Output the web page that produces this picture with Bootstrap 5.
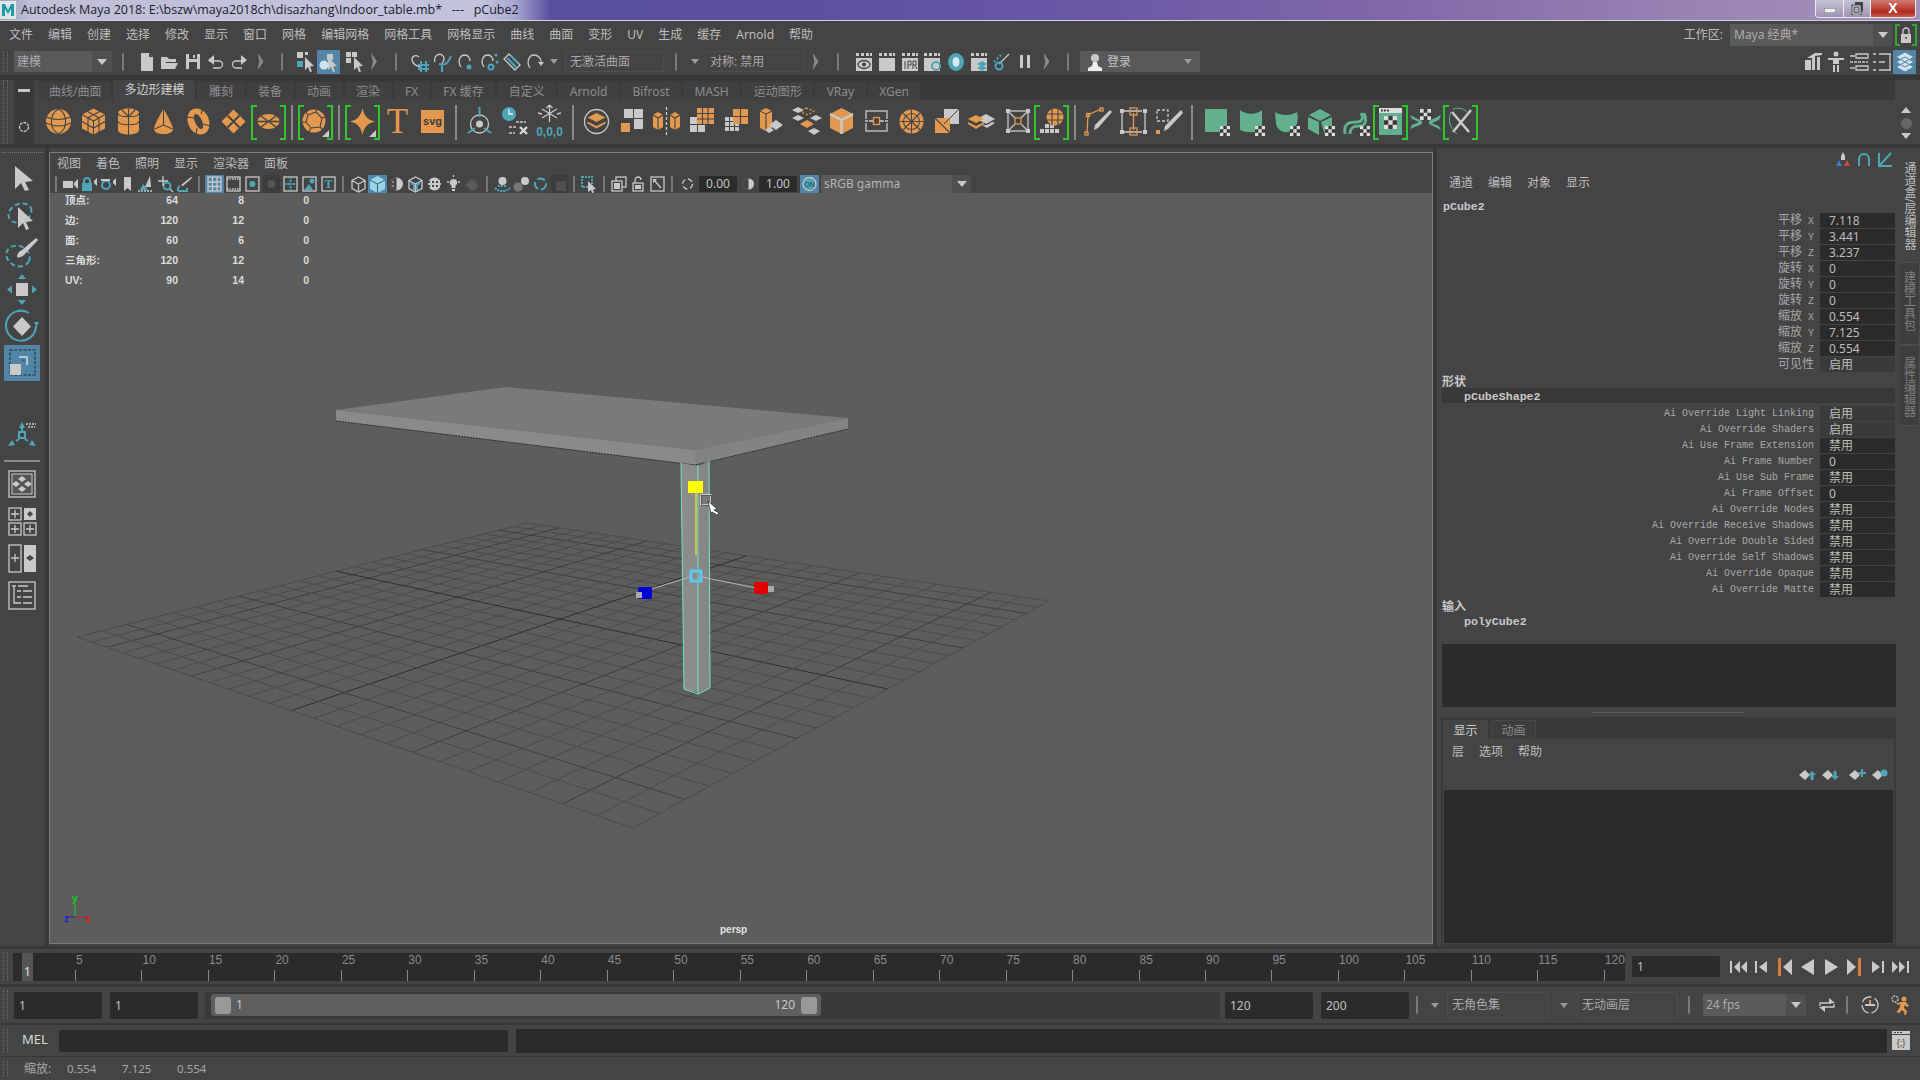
<!DOCTYPE html>
<html lang="zh"><head><meta charset="utf-8"><title>Maya</title>
<link href="https://cdn.jsdelivr.net/npm/bootstrap@5.3.0/dist/css/bootstrap.min.css" rel="stylesheet">
<style>
html,body{height:1080px;overflow:hidden}
body{background:#444;color:#bdbdbd;font:12px/16px "Noto Sans","Noto Sans CJK SC",sans-serif}
svg{display:block;flex:none}
.flex-none{flex:none}
.fo{fill:#e2994f}.fg{fill:#c9c9c9}.ft{fill:#4ea5b8}.fm{fill:#63b08f}
.ld{fill:none;stroke:#444;stroke-width:1.1}.lg{fill:none;stroke:#c9c9c9;stroke-width:1.3}.lt{fill:none;stroke:#4ea5b8;stroke-width:2}.lo{fill:none;stroke:#e2994f;stroke-width:1.3}
.ttl{height:21px;border-bottom:1px solid #cfcbe0;background:linear-gradient(90deg,#98a0b0 0,#bfc0d6 30px,#c2c2dc 480px,#a8a8d0 515px,#5a50a0 550px,#5c50a0 800px,#6a58a6 1100px,#8268a8 1400px,#9a84b4 1700px,#a592ba 100%);color:#1c1c2c;font:12.5px/20px "Open Sans","Noto Sans CJK SC",sans-serif}
.ttl-t{margin-left:5px;white-space:pre}
.win{width:101px;height:18px;margin-right:4px;border:1px solid #e8e8f0;border-top:0;border-radius:0 0 4px 4px;overflow:hidden}
.win>div{height:100%;color:#fff;font:bold 14px/17px "Liberation Sans",sans-serif;text-align:center}
.wmin{width:28px;background:linear-gradient(#c8c3d6,#9d94b4);border-right:1px solid #eee}
.wmax{width:27px;background:linear-gradient(#c8c3d6,#9d94b4);border-right:1px solid #eee}
.wcl{flex:1;background:linear-gradient(#d07a70,#b02a20 70%,#c85a48)}
.mnu{height:27px;padding-left:9px;gap:15px}
.mnu .nav-link,.pm .nav-link{padding:0;color:#bdbdbd;font-size:12px;line-height:16px}
.wk{margin-left:auto;height:22px;padding-right:3px}
.wkf{width:143px;height:22px;background:#5a5a5a;color:#aaa;padding:3px 4px;margin-left:7px}
.wka{width:19px;height:22px;background:#4f4f4f;margin-right:3px}
.tri{width:0;height:0;border-left:5px solid transparent;border-right:5px solid transparent;border-top:6px solid #c9c9c9;margin:auto}
.tup{transform:rotate(180deg)}
.tsm{border-left-width:4px;border-right-width:4px;border-top-width:5px;border-top-color:#9a9a9a}
.lock{width:22px;height:22px}
.tbar{height:27px;padding-left:3px}
.hd{width:5px;flex:none;align-self:stretch;margin:3px 0;border-left:1px dotted #6e6e6e;border-right:1px dotted #6e6e6e}
.dd{height:21px;background:#5a5a5a;color:#aaa;padding-left:3px;line-height:21px}
.dd1{width:98px;margin-left:6px}.dda{width:20px;height:100%;margin-left:auto;background:#4f4f4f;display:flex;align-items:center}
.vs{width:12px;height:18px;flex:none;position:relative}
.vs::after{content:"";display:block;width:2px;height:100%;margin:auto;background:#7a7a7a;border-radius:1px}
.as{width:21px;height:18px;flex:none}
.as::after{content:"";display:block;height:18px;width:6px;margin:auto;background:#8a8a8a;clip-path:polygon(0 0,100% 50%,0 100%,30% 50%)}
.as16{width:16px}
.tb{width:23px;height:24px;flex:none;display:flex;align-items:center;justify-content:center}
.on{background:#5285a6}
.fl{height:21px;border:1px solid #4e4e4e;color:#a8a8a8;padding-left:4px;line-height:19px;border-radius:2px;flex:none}
.ml1{margin-left:1px}.ml2{margin-left:2px}.ml5{margin-left:5px}.ml3{margin-left:3px}.ml8{margin-left:8px}.ml6{margin-left:6px}.ml4{margin-left:4px}.ml9{margin-left:9px}
.w99{width:99px}.w100{width:100px}
.dsp{width:15px;flex:none}
.sp6{width:6px;flex:none}
.log{width:120px;background:#595959;color:#c4c4c4;padding-left:7px;line-height:21px;height:21px;margin-left:6px}
.sep5{height:5px;background:#373737;flex:none}
.sep3{height:3px;background:#373737;flex:none}.sep2{height:2px;background:#373737;flex:none}.sep1{height:1px;background:#373737;flex:none}
.shelf{height:64px;flex:none;padding-left:3px}
.shd{margin:0}
.shc{width:20px;height:64px;margin-left:6px;background:#3a3a3a;flex:none;padding-top:9px}
.shbar{width:12px;height:3px;background:#c9c9c9;margin:0 auto 28px}
.shm{flex:1;min-width:0;margin-left:5px}
.stabs{height:20px;background:#3a3a3a;margin-right:3px;gap:2px;border:0;padding-left:0;align-items:flex-end}
.stabs .nav-link{padding:0 11.5px;height:18px;line-height:20px;background:#404040;color:#8d8d8d;font-size:12px;border:0;border-radius:2px 2px 0 0;margin:0}
.stabs .nav-link.active{background:#444;color:#d0d0d0;height:20px;line-height:20px;padding:0 11px}
.stabs li:first-child .nav-link{padding:0 10px}
.sic{height:44px;padding-left:2px}
.ic{width:35px;height:43px;flex:none;position:relative}
.ic svg{margin-top:-1px}
.vs2{width:12px;height:35px;flex:none}
.vs2::after{content:"";display:block;width:2px;height:100%;margin:auto;background:#8a8a8a}
.gb::before,.gb::after{content:"";position:absolute;top:4px;bottom:4px;width:6px;border:2px solid #2dc62d}
.gb::before{left:0;border-right:0}.gb::after{right:0;border-left:0}
.scr{width:16px;margin-left:auto;margin-right:6px;height:34px}
.main{height:798px;flex:none;min-height:0}
.tl{width:45px;flex:none;padding-bottom:6px}
.tlh{height:1px;margin:4px 2px 6.5px 2px;border-top:1px dotted #7a7a7a;flex:none}
.sl{width:36px;height:37px;margin-left:4px;flex:none}
.hr1{height:2px;background:#8a8a8a;width:36px;margin:4px 0 4px 4px;flex:none}
.gut{width:4px;background:#373737;flex:none}
.vp{width:1384px;height:792px;margin-top:4px;border:1px solid #7c7c7c;flex:none;background:#5d5d5d;position:relative;overflow:hidden}
.pm{height:22px;gap:15px;padding-left:7px;background:#444}
.pt{height:18px;background:#444;padding-left:1px}
.ps{width:19px;height:18px;flex:none}
.psw{width:10px;height:16px;flex:none}
.psw::after{content:"";display:block;width:2px;height:100%;margin:auto;background:#777}
.pf{width:38px;height:16px;background:#2b2b2b;color:#c4c4c4;text-align:center;line-height:16px;border-radius:2px;flex:none}
.srgb{width:150px;height:18px;background:#5a5a5a;color:#b4b4b4;margin-left:2px;padding-left:3px;line-height:18px}
.srgba{width:19px;height:100%;margin-left:auto;background:#4f4f4f;display:flex;align-items:center}
.gl{position:absolute;left:0;top:40px;width:1382px;height:750px}
.hud{position:absolute;left:15px;top:37px;display:grid;grid-template-columns:50px 63px 66px 65px;grid-auto-rows:20px;color:#dcdcdc;font:bold 10.5px/20px "Liberation Sans","Noto Sans CJK SC",sans-serif}
.hud span:not(.hl){text-align:right}
.persp{position:absolute;left:670px;top:770px;width:26px;text-align:center;color:#e2e2e2;font:bold 10px/14px "Liberation Sans",sans-serif}
.cbox{width:463px;flex:none;padding:0 5px}
.chic{height:24px;gap:5px;padding-right:2px;padding-bottom:3px}
.chm{height:22px;gap:15px;padding-left:7px;align-items:center}
.nm{font:bold 11.6px/16px "Liberation Mono",monospace;color:#c8c8c8}
.nm1{height:18px;padding:5px 0 0 1px;flex:none}
.rw{height:16px;flex:none;justify-content:flex-end;align-items:center}
.rl{color:#a8a8a8;font:10px/17px "Liberation Mono","Noto Sans CJK SC",monospace;text-align:right;white-space:pre;padding-right:6px}
.rl b{font:12px/16px "Noto Sans CJK SC",sans-serif;color:#a8a8a8}
.rv{width:75px;height:15px;background:#2b2b2b;color:#bdbdbd;padding-left:9px;line-height:15px;flex:none;border-radius:1px;font-size:12px}
.rv2{background:#3a3a3a}
.hdg{height:16px;flex:none;font:bold 12px/18px "Noto Sans CJK SC",sans-serif;color:#c8c8c8}
.bar{height:15px;background:#383838;padding-left:22px;margin-bottom:2px;line-height:17px;flex:none}
.sub{height:16px;padding-left:22px;margin-bottom:15px;flex:none;line-height:18px}
.blk{height:63px;background:#2b2b2b;flex:none;margin-right:-1px}
.dots{height:10px;flex:none;display:flex;align-items:center;justify-content:center}
.dots::after{content:"";width:151px;border-top:1px dotted #777}
.lay{flex:1;min-height:0;margin:0 -1px;background:#444;border:solid #3a3a3a;border-width:0 2px 2px 2px}
.ltabs{height:22px;background:#3a3a3a;border:0;padding:3px 0 0 0;gap:3px;flex:none;flex-wrap:nowrap}
.ltabs .nav-link{width:45px;height:19px;padding:0;text-align:center;line-height:19px;background:#3d3d3d;color:#888;border:1px solid #484848;border-bottom:0;border-radius:2px 2px 0 0;font-size:12px;margin:0}
.ltabs .nav-link.active{background:#444;color:#ccc;border-color:#444}
.lm{height:26px;gap:15px;padding-left:9px;flex:none}
.lic{height:25px;gap:5px;padding:0 5px 5px 0;flex:none}
.llist{flex:1;background:#2b2b2b;margin:0 1px 1px}
.vt{width:20px;flex:none;padding-top:2px}
.vtb{writing-mode:vertical-rl;font-size:12px;line-height:16px;background:#3e3e3e;color:#7f7f7f;border:1px solid #4c4c4c;border-left:0;display:flex;align-items:center;flex:none;padding-right:2px}
.v1{height:112px;background:#444;color:#bdbdbd;padding-top:12px;border:0}
.v2{height:83px;padding-top:8px}.v3{height:81px;padding-top:11px}
.tlr{height:35px;padding-left:3px;flex:none}
.trk{width:1612px;height:28px;margin-left:5px;background:#2b2b2b;overflow:hidden;flex:none;padding-left:9px}
.cur{width:11px;height:28px;background:#555;color:#e4e4e4;text-align:center;line-height:38px;flex:none;margin-right:42px}
.tk{flex:0 0 66.48px;height:28px;padding-left:1px;color:#8a8a8a;font:12px/14px "Liberation Sans",sans-serif;background:linear-gradient(#8a8a8a,#8a8a8a) left bottom/1px 11px no-repeat;white-space:nowrap}
.fd{height:27px;background:#2b2b2b;color:#c0c0c0;border-radius:2px;padding-left:5px;line-height:27px;flex:none;width:88px}
.fd21{height:21px;line-height:21px}
.ml7{margin-left:7px}
.pb{gap:0;margin-left:7px}
.rng{height:36px;padding-left:3px;flex:none}
.strip{width:1015px;height:27px;margin-left:7px;background:#3a3a3a;padding-left:6px;flex:none}
.sld{width:610px;height:22px;background:#5e5e5e;border-radius:3px;padding:0 4px;color:#c8c8c8}
.knob{width:16px;height:17px;background:#999;border-radius:3px;flex:none;margin-right:5px}
.knob2{margin:0 0 0 6px}
.cmd{height:31px;padding-left:3px;flex:none}
.mel{width:37px;margin-left:14px;color:#d8d8d8;flex:none;font-size:13px;line-height:15px;padding-bottom:2px}
.c1{width:449px;height:22px;background:#2b2b2b;border-radius:2px;flex:none}
.c2{width:1371px;height:24px;background:#2b2b2b;margin-left:8px;flex:none}
.stat{height:23px;padding-left:3px;flex:none;color:#a8a8a8;line-height:23px}
.stat span{flex:none}
.st1{margin-left:16px;width:43px}.st2{width:55px;font-size:11.5px}
#chr,#ani{width:101px;height:26px;line-height:24px}
#fps{width:103px;height:22px;line-height:22px}
</style></head>
<body class="d-flex flex-column">
<svg class="d-none"><defs>
<symbol id="ck" viewBox="0 0 12 12"><rect width="12" height="12" fill="#3a3a3a"/><path fill="#ddd" d="M0 0h4v4H0zM8 0h4v4H8zM4 4h4v4H4zM0 8h4v4H0zM8 8h4v4H8z"/></symbol>
<symbol id="tri" viewBox="0 0 7 7"><path class="fg" d="M7 0v7H0z"/></symbol>
<linearGradient id="mg" x1="0" y1="0" x2="0" y2="1"><stop offset="0" stop-color="#8fd5dc"/><stop offset="1" stop-color="#1f9aa6"/></linearGradient>
</defs></svg>

<!-- title bar -->
<div class="ttl d-flex align-items-start flex-none">
<svg width="16" height="20" viewBox="0 0 16 20"><rect y="1" width="16" height="18" fill="#dfe6e8"/><path fill="#1f9aa6" d="M2 16V4h3l3 6 3-6h3v12h-3V9l-3 5-3-5v7z"/></svg>
<div class="ttl-t">Autodesk Maya 2018: E:\bszw\maya2018ch\disazhang\Indoor_table.mb*   ---   pCube2</div>
<div class="win ms-auto d-flex"><div class="wmin d-flex align-items-end justify-content-center pb-1"><svg width="12" height="5"><rect width="12" height="5" fill="#eee" stroke="#666"/></svg></div><div class="wmax d-flex align-items-center justify-content-center"><svg width="12" height="13"><path fill="none" stroke="#444" stroke-width="3" d="M4 1.500h6.500v8M2 4h7v8H2z"/><path fill="none" stroke="#eee" d="M2 4h7v8H2z"/></svg></div><div class="wcl">X</div></div>
</div>

<!-- menu -->
<nav class="nav mnu align-items-center flex-nowrap flex-none">
<a class="nav-link">文件</a><a class="nav-link">编辑</a><a class="nav-link">创建</a><a class="nav-link">选择</a><a class="nav-link">修改</a><a class="nav-link">显示</a><a class="nav-link">窗口</a><a class="nav-link">网格</a><a class="nav-link">编辑网格</a><a class="nav-link">网格工具</a><a class="nav-link">网格显示</a><a class="nav-link">曲线</a><a class="nav-link">曲面</a><a class="nav-link">变形</a><a class="nav-link">UV</a><a class="nav-link">生成</a><a class="nav-link">缓存</a><a class="nav-link">Arnold</a><a class="nav-link">帮助</a>
<div class="wk d-flex align-items-center"><span>工作区:</span><div class="wkf">Maya 经典*</div><div class="wka d-flex align-items-center"><div class="tri"></div></div>
<div class="lock"><svg width="22" height="22" viewBox="0 0 22 22"><path d="M5 1H1v20h4M17 1h4v20h-4" fill="none" stroke="#2dc62d" stroke-width="1.500"/><path class="lg" stroke-width="2" d="M8 10V7a3 3 0 0 1 6 0v3"/><rect class="fg" x="6" y="10" width="10" height="9"/><circle cx="11" cy="14" r="1" fill="#444"/></svg></div></div>
</nav>

<!-- status tool row -->
<div class="tbar d-flex align-items-center flex-none">
<div class="hd"></div>
<div class="dd dd1 d-flex flex-none">建模<div class="dda"><div class="tri"></div></div></div>
<div class="vs ml5"></div><div class="sp6"></div>
<div class="tb"><svg width="16" height="20"><path class="fg" d="M2 1h8l4 4v14H2z"/><path fill="#444" d="M10 1v4h4z"/></svg></div>
<div class="tb"><svg width="19" height="16"><path class="fg" d="M1 3h6l2 2h7v3H6l-2 7H1z"/><path class="fg" d="M5 9h13l-3 6H3z"/></svg></div>
<div class="tb"><svg width="16" height="17"><path class="fg" d="M1 1h14v15H1z"/><path fill="#444" d="M4 1h8v5H4zM4 9h8v7H4z"/><rect class="fg" x="8" y="2" width="2" height="3"/></svg></div>
<div class="tb"><svg width="18" height="14"><path class="lg" stroke-width="2.500" d="M7 2 3 6h9a3.500 3.500 0 0 1 0 7H6"/><path class="fg" d="M7 0v10L1 5z"/></svg></div>
<div class="tb"><svg width="18" height="14"><path class="lg" stroke-width="2.500" d="M11 6H6a3.500 3.500 0 0 0 0 7h6"/><path class="fg" d="M11 0v10l6-5z"/></svg></div>
<div class="as"></div><div class="vs ml5"></div><div class="ml3"></div>
<div class="tb ml3"><svg width="19" height="22"><path class="fg" d="M9 6l9 9-4 .500 2 5-2 .500-2-5-3 3z"/><rect class="fg" x="1" y="1" width="6" height="6"/><rect class="ft" x="1" y="10" width="6" height="6"/><rect class="fg" x="9" y="1" width="3" height="3"/></svg></div>
<div class="tb on"><svg width="20" height="22"><path class="fg" d="M9 6l9 9-4 .500 2 5-2 .500-2-5-3 3z"/><circle cx="5" cy="14" r="4.500" fill="#cfe2ee"/><rect class="fg" x="8" y="3" width="6" height="6"/></svg></div>
<div class="tb ml3"><svg width="20" height="22"><path class="fg" d="M9 6l9 9-4 .500 2 5-2 .500-2-5-3 3z"/><path class="fg" d="M1 1h5v5H1zM7 1h5v5H7zM1 7h5v5H1z"/></svg></div>
<div class="as as16"></div><div class="vs ml8"></div><div class="ml6"></div>
<div class="tb"><svg width="20" height="20"><path class="lg" d="M9 5a4 4 0 0 0-7 3c1 4 4 6 8 7"/><path class="lt" stroke-width="1.200" d="M8 13h11M8 17h11M11 9v11M16 9v11"/></svg></div>
<div class="tb"><svg width="20" height="20"><path class="lg" d="M2 10C0 4 6 1 9 3c3 2 2 6 0 9"/><path class="lt" stroke-width="1.500" d="M9 14v6M6 12c5 2 9 0 12-8"/></svg></div>
<div class="tb"><svg width="20" height="20"><path class="lg" stroke-width="1.800" d="M5 15C1 9 4 3 9 3c3 0 5 3 5 6"/><circle class="ft" cx="13" cy="15" r="2.500"/></svg></div>
<div class="tb"><svg width="20" height="20"><path class="lg" stroke-width="1.800" d="M5 15C1 9 4 3 9 3c3 0 5 3 5 6"/><circle class="lt" stroke-width="1.200" cx="12" cy="15" r="2.500"/><circle class="ft" cx="17" cy="3" r="1.500"/><circle class="ft" cx="18" cy="10" r="1.500"/></svg></div>
<div class="tb"><svg width="20" height="20"><path class="lg" d="M7 2l11 11-5 5L2 7z"/><path class="lt" stroke-width="1.200" d="M5 6l10 10M9 4l7 7"/></svg></div>
<div class="tb"><svg width="20" height="20"><path class="lg" stroke-width="1.800" d="M5 16C1 10 4 3 9 3c4 0 7 3 7 7"/><path class="fg" d="M13 10h6l-3 4z"/></svg></div>
<div class="dsp d-flex align-items-center"><div class="tri tsm"></div></div>
<div class="fl ml4 w99" >无激活曲面</div>
<div class="vs ml6"></div><div class="ml5"></div>
<div class="dsp d-flex align-items-center"><div class="tri tsm"></div></div>
<div class="fl ml3 w100">对称: 禁用</div>
<div class="as"></div><div class="vs ml6"></div><div class="ml8"></div>
<div class="tb"><svg width="18" height="20"><path class="fg" d="M1 6h16v13H1z"/><path class="fg" d="M1 1h3v3H1zM6 1h3v3H6zM11 1h3v3h-3zM15 1h2v3h-2z"/><ellipse cx="9" cy="12.500" rx="6" ry="4" fill="none" stroke="#444" stroke-width="1.300"/><circle cx="9" cy="12.500" r="2" fill="#444"/></svg></div>
<div class="tb"><svg width="18" height="20"><path class="fg" d="M1 6h16v13H1z"/><path class="fg" d="M1 1h3v3H1zM6 1h3v3H6zM11 1h3v3h-3zM15 1h2v3h-2z"/></svg></div>
<div class="tb"><svg width="18" height="20"><path class="fg" d="M1 6h16v13H1z"/><path class="fg" d="M1 1h3v3H1zM6 1h3v3H6zM11 1h3v3h-3zM15 1h2v3h-2z"/><path fill="none" stroke="#444" d="M4 9v8M7 9v8M7 9h3v4H7M12 17v-8h3v4h-3M14 13l2 4"/></svg></div>
<div class="tb"><svg width="19" height="20"><path class="fg" d="M1 6h16v13H1z"/><path class="fg" d="M1 1h3v3H1zM6 1h3v3H6zM11 1h3v3h-3zM15 1h2v3h-2z"/><circle class="lt" cx="13" cy="14" r="4" stroke-width="2.500"/></svg></div>
<div class="tb"><svg width="18" height="20"><ellipse class="ft" cx="9" cy="10" rx="8" ry="9"/><ellipse cx="9" cy="10" rx="3.500" ry="5" fill="#d8e8ec"/></svg></div>
<div class="tb"><svg width="18" height="20"><path class="fg" d="M1 6h16v13H1z"/><path class="fg" d="M1 1h3v3H1zM6 1h3v3H6zM11 1h3v3h-3zM15 1h2v3h-2z"/><path class="ft" d="M12 9l5 3-5 3-5-3zM12 13l5 3-5 3-5-3z"/></svg></div>
<div class="tb"><svg width="18" height="20"><path class="lg" stroke-width="2.500" d="M16 2 6 12"/><circle class="lt" cx="6" cy="14" r="3.500"/><path class="lt" stroke-width="1" stroke-dasharray="2" d="M1 10 8 3"/></svg></div>
<div class="tb"><svg width="12" height="15"><path class="fg" d="M1 1h3v13H1zM8 1h3v13H8z"/></svg></div>
<div class="as"></div><div class="vs ml5"></div>
<div class="log d-flex align-items-center"><svg width="16" height="18" class="me-1"><circle class="fg" cx="8" cy="5" r="4"/><path fill="#eee" d="M6 9h4l1 4 4 2v3H1v-3l4-2z"/></svg>登录<div class="tri tsm ms-auto me-2"></div></div>
<div class="d-flex ms-auto align-items-center flex-none">
<div class="tb"><svg width="20" height="20"><path class="fg" d="M4 6 12 1h7v2l-7 1v14H9V6zM2 8h6v10H2z"/><path class="fg" d="M14 5h3v13h-3z"/></svg></div>
<div class="tb"><svg width="18" height="22"><circle class="fg" cx="9" cy="3" r="2.500"/><path class="fg" d="M1 7h16v2h-5v4H6V9H1zM6 14h2v7H6zM10 14h2v7h-2z"/></svg></div>
<div class="tb"><svg width="20" height="20"><path class="lg" d="M7 2h12v4H7zM1 4h5M7 14h12v4H7zM1 16h5"/><path class="lg" stroke-dasharray="3 1" d="M1 10h18"/></svg></div>
<div class="tb"><svg width="20" height="20"><path class="lg" d="M7 2h12M7 18h12M7 10h6M1 2h3M1 10h3M1 18h3M18 2v16"/></svg></div>
<div class="tb on me-1"><svg width="20" height="22"><path fill="#cfe2ee" stroke="#5285a6" d="M10 1l9 5-9 5-9-5zM10 6l9 5-9 5-9-5zM10 11l9 5-9 5-9-5z"/></svg></div>
</div>
</div>
<div class="sep5"></div>

<!-- shelf -->
<div class="shelf d-flex">
<div class="hd shd"></div>
<div class="shc"><div class="shbar"></div><svg width="14" height="14" viewBox="0 0 14 14" class="mx-auto"><circle class="lg" stroke-width="2.500" cx="7" cy="7" r="4.500" stroke-dasharray="3 1"/></svg></div>
<div class="shm d-flex flex-column">
<ul class="nav nav-tabs stabs flex-nowrap">
<li><a class="nav-link">曲线/曲面</a></li><li><a class="nav-link active">多边形建模</a></li><li><a class="nav-link">雕刻</a></li><li><a class="nav-link">装备</a></li><li><a class="nav-link">动画</a></li><li><a class="nav-link">渲染</a></li><li><a class="nav-link">FX</a></li><li><a class="nav-link">FX 缓存</a></li><li><a class="nav-link">自定义</a></li><li><a class="nav-link">Arnold</a></li><li><a class="nav-link">Bifrost</a></li><li><a class="nav-link">MASH</a></li><li><a class="nav-link">运动图形</a></li><li><a class="nav-link">VRay</a></li><li><a class="nav-link">XGen</a></li>
</ul>
<div class="sic d-flex align-items-center">
<div class="ic"><svg width="35" height="43"><circle class="fo" cx="17.500" cy="21.500" r="12.500"/><path class="ld" d="M5 17q12.500 5 25 0M5 23q12.500 6 25 0M17.500 9C8 14 8 29 17.500 34M17.500 9C27 14 27 29 17.500 34"/></svg></div>
<div class="ic"><svg width="35" height="43"><path class="fo" d="M17.500 8.500 29 14.500V28.500L17.500 34.500 6 28.500V14.500Z"/><path class="ld" d="M6 14.500 17.500 21 29 14.500M17.500 21V34.500M11.500 11.500 23 17.700M23.500 11.500 12 17.700M6 21.500 17.500 28 29 21.500M12 18v14M23 18v14"/></svg></div>
<div class="ic"><svg width="35" height="43"><path class="fo" d="M7 13c0-6 21-6 21 0V30c0 6-21 6-21 0Z"/><path class="ld" d="M7 13c0 5 21 5 21 0M7 21c0 5 21 5 21 0M17.500 8.500v8M10.500 9.500l7 7M24.500 9.500l-7 7M17.500 17v18"/></svg></div>
<div class="ic"><svg width="35" height="43"><path class="fo" d="M17.500 8C21 16 27 25 27 29c0 3-4 5-9.500 5S8 32 8 29C8 25 14 16 17.500 8Z"/><path class="ld" d="M17.500 8V25M8.500 29 17.500 25 26.500 29"/></svg></div>
<div class="ic"><svg width="35" height="43"><ellipse class="fo" cx="17.500" cy="21.500" rx="10.500" ry="13.500" transform="rotate(-25 17.500 21.500)"/><ellipse fill="#444" cx="17.500" cy="21.500" rx="3.500" ry="8" transform="rotate(-25 17.500 21.500)"/><path class="ld" d="M6 17l7 1M22 8l-2 6M29 26l-7-2M15 35l1-7"/></svg></div>
<div class="ic"><svg width="35" height="43"><path class="fo" d="M17.500 9.500 29.500 21.500 17.500 33.500 5.500 21.500Z"/><path fill="none" stroke="#444" stroke-width="1.800" d="M11.500 15.500 23.500 27.500M23.500 15.500 11.500 27.500"/></svg></div>
<div class="ic gb"><svg width="35" height="43"><ellipse class="fo" cx="17.500" cy="21.500" rx="11" ry="7.500"/><path fill="none" stroke="#444" stroke-width="1.500" d="M6.500 21.500h22M10 16l15 11M25 16 10 27"/></svg></div>
<div class="vs2"></div>
<div class="ic gb"><svg width="35" height="43"><circle class="fo" cx="16" cy="21" r="11.500"/><path class="ld" d="M10 15l8-3 6 6-2 9-9 1-5-6zM10 15 7 11M18 12l1-4M24 18l4-1M22 27l3 3M13 28l-2 4M8 22H4"/><use href="#tri" x="24" y="30" width="7" height="7"/></svg></div>
<div class="vs2"></div>
<div class="ic gb"><svg width="35" height="43"><path class="fo" d="M17.500 8C19 16 23 20 30 21.500 23 23 19 27 17.500 35 16 27 12 23 5 21.500 12 20 16 16 17.500 8Z"/><use href="#tri" x="24" y="30" width="7" height="7"/></svg></div>
<div class="ic"><svg width="35" height="43"><text x="17.500" y="33" text-anchor="middle" class="fo" font-family="Liberation Serif" font-size="35">T</text></svg></div>
<div class="ic"><svg width="35" height="43"><rect class="fo" x="6" y="10" width="23" height="23"/><text x="17.500" y="25" text-anchor="middle" fill="#3a3a3a" font-family="Liberation Sans" font-weight="bold" font-size="11">svg</text></svg></div>
<div class="vs2"></div>
<div class="ic"><svg width="35" height="43"><circle class="lg" cx="17.500" cy="24" r="9"/><circle class="fg" cx="17.500" cy="24" r="3.500"/><path class="lt" stroke-width="1.500" d="M17.500 7v10M6 33l7-5M29 33l-7-5"/></svg></div>
<div class="ic"><svg width="35" height="43"><circle class="ft" cx="12" cy="14" r="7"/><path fill="none" stroke="#eee" stroke-width="1.300" d="M12 9v5h4"/><path class="lg" d="M19 22h10M12 27h8M12 33h6" stroke-dasharray="3 1"/><path fill="none" stroke="#d8d8d8" stroke-width="2.400" d="M23 27l7 7M30 27l-7 7"/></svg></div>
<div class="ic"><svg width="35" height="43"><path class="lg" stroke-width="1.500" d="M17.500 5v17M10 9l15 9M25 9l-15 9M17.500 5l-3 3M17.500 5l3 3M6 13l4 1M29 13l-4 1"/><text x="17.500" y="36" text-anchor="middle" class="ft" font-family="Liberation Sans" font-weight="bold" font-size="12">0,0,0</text></svg></div>
<div class="vs2"></div>
<div class="ic"><svg width="35" height="43"><circle class="lg" cx="17.500" cy="21.500" r="12"/><path class="fo" d="M17.500 13l9 4.500-9 4.500-9-4.500zM8.500 21.500l9 4.500 9-4.500v2l-9 5-9-5z"/></svg></div>
<div class="ic"><svg width="35" height="43"><path class="fg" d="M10 9h9v9h-9zM20 9h9v9h-9zM20 19h9v10h-9z"/><rect class="fo" x="7" y="23" width="9" height="9"/></svg></div>
<div class="ic"><svg width="35" height="43"><path class="fo" d="M4 15l5-3 5 3v12l-5 3-5-3zM21 15l5-3 5 3v12l-5 3-5-3z"/><path class="ld" d="M4 15l5 3 5-3M9 18v12M21 15l5 3 5-3M26 18v12"/><path class="lg" stroke-dasharray="3 2" d="M17.500 7v30"/></svg></div>
<div class="ic"><svg width="35" height="43"><path class="fg" d="M6 17h7v7H6zM6 25h7v7H6zM14 25h7v7h-7z"/><path class="fo" d="M13 8h17v16H13z"/><path class="ld" d="M13 13.500h17M13 19h17M18.500 8v16M24 8v16"/></svg></div>
<div class="ic"><svg width="35" height="43"><path class="fg" d="M6 17h4v4H6zM11 17h4v4h-4zM16 17h4v4h-4zM6 22h4v4H6zM11 22h4v4h-4zM16 22h4v4h-4zM6 27h4v4H6zM11 27h4v4h-4zM16 27h4v4h-4z"/><path class="fo" d="M14 9h15v15H14z" /><path class="ld" d="M21.500 9v15M14 16.500h15"/></svg></div>
<div class="ic"><svg width="35" height="43"><path class="fo" d="M6 11l6-3 6 3v17l-6 3-6-3z"/><path class="ld" d="M6 11l6 3 6-3M12 14v17"/><path class="fg" d="M22 20l7 5-7 5-7-5zM15 27l5 3-5 3-4-3z"/></svg></div>
<div class="ic"><svg width="35" height="43"><path class="fg" d="M9 7l6 3-6 3-6-3zM27 15l6 3-6 3-6-3zM9 15l6 3-6 3-6-3zM25 28l6 3-6 4-6-4z"/><path class="fo" d="M18 20l7 4-7 4-7-4z"/><path class="lo" stroke-dasharray="2" d="M17 8l8 3-6 4-7-3z"/></svg></div>
<div class="ic"><svg width="35" height="43"><path class="fo" d="M17.500 8 29 14v14l-11.500 6L6 28V14Z"/><path fill="none" stroke="#c9c9c9" stroke-width="2.500" d="M6 14l11.500 6L29 14M17.500 20v14"/></svg></div>
<div class="ic"><svg width="35" height="43"><rect class="lg" x="7" y="11" width="21" height="20"/><rect class="lo" x="14.500" y="17.500" width="6" height="7" stroke-width="1.500"/><path fill="#444" d="M5 19h5v4H5zM25 19h5v4h-5z"/><path class="lg" d="M6 21h3M10 21h4M21 21h4M26 21h3"/></svg></div>
<div class="ic"><svg width="35" height="43"><circle class="fo" cx="17.500" cy="21.500" r="12"/><circle class="ld" cx="17.500" cy="21.500" r="8"/><path class="ld" d="M5.500 21.500h24M17.500 9.500v24M9 13l17 17M26 13 9 30"/></svg></div>
<div class="ic"><svg width="35" height="43"><path class="fg" d="M15 9h15v15H15z"/><path class="fo" d="M6 18h15v15H6z"/><path class="ld" d="M6 18l15 15"/><path stroke="#444" d="M30 9 15 24"/></svg></div>
<div class="ic"><svg width="35" height="43"><path class="fg" d="M22 14l9 5-9 5-9-5z"/><path class="fo" d="M12 15l8 4-8 4-8-4z"/><path class="fo" d="M4 22l8 4 8-4v2l-8 5-8-5z"/><path class="fg" d="M23 25l5-3 3 1-8 5-5-3z"/></svg></div>
<div class="ic"><svg width="35" height="43"><rect class="lg" x="9" y="11" width="20" height="20"/><path class="lg" d="M9 11l7 7M29 11l-7 7M9 31l7-7M29 31l-7-7"/><path class="fg" d="M7 9h4v4H7zM27 9h4v4h-4zM7 29h4v4H7zM27 29h4v4h-4z"/><rect class="lo" x="16" y="18" width="6" height="6" stroke-width="1.500"/></svg></div>
<div class="ic gb"><svg width="35" height="43"><path class="fg" d="M8 24h4v4H8zM13 24h4v4h-4zM8 29h4v4H8zM13 29h4v4h-4zM18 29h4v4h-4zM3 29h4v4H3z" transform="translate(3 0)"/><circle class="fo" cx="21" cy="17" r="8.500"/><path class="ld" d="M12.500 14h17M12.500 20h17M18 8.500v17M24 8.500v17"/></svg></div>
<div class="vs2"></div>
<div class="ic"><svg width="35" height="43"><path class="lo" d="M6 33 7 15 20 9"/><rect class="lo" x="4" y="32" width="3" height="3"/><rect class="lo" x="5.500" y="13.500" width="3" height="3"/><rect class="lo" x="19" y="8" width="3" height="3"/><path class="fg" d="M29 10l2 2-14 16-4 2 1-5z"/></svg></div>
<div class="ic"><svg width="35" height="43"><path class="lg" d="M8 11h18M8 32h18M6 12v19M29 12v19"/><path class="fg" d="M4 9h4v4H4zM27 9h4v4h-4zM4 30h4v4H4zM27 30h4v4h-4z"/><path class="lo" d="M17.500 13v17"/><rect class="lo" x="14" y="8" width="7" height="7"/><rect class="lo" x="14" y="28" width="7" height="7"/></svg></div>
<div class="ic"><svg width="35" height="43"><rect class="lg" x="6" y="10" width="11" height="11" stroke-dasharray="3 2"/><rect class="fo" x="5" y="30" width="4" height="4"/><path class="fg" d="M30 10l2 3-15 16-4 2 1-5z"/></svg></div>
<div class="vs2"></div>
<div class="ic"><svg width="35" height="43"><rect class="fm" x="7" y="9" width="22" height="23"/><use href="#ck" x="22" y="26" width="10" height="10"/></svg></div>
<div class="ic"><svg width="35" height="43"><path class="fm" d="M7 10c6 5 16 5 22 0v20c-7 3-15 3-22 0z"/><use href="#ck" x="22" y="26" width="10" height="10"/></svg></div>
<div class="ic"><svg width="35" height="43"><path class="fm" d="M7 12c6 4 16 4 22 0 2 8 0 16-6 19-7 3-13 0-15-7z"/><use href="#ck" x="22" y="26" width="10" height="10"/></svg></div>
<div class="ic"><svg width="35" height="43"><path class="fm" d="M17 9 28 15 17 21 6 15ZM5 17l11 5v13L5 29zM18 22l11-5v9l-7 0v9z"/><use href="#ck" x="22" y="26" width="10" height="10"/></svg></div>
<div class="ic"><svg width="35" height="43"><path fill="none" stroke="#63b08f" stroke-width="3" d="M7 34C5 22 13 22 19 22c5 0 7-4 4-9M12 34c0-7 4-8 9-8 7 0 8-6 5-13"/><use href="#ck" x="22" y="26" width="10" height="10"/></svg></div>
<div class="ic gb"><svg width="35" height="43"><rect class="fm" x="6" y="8" width="23" height="27"/><rect fill="#ddd" x="6" y="8" width="23" height="5"/><path fill="#444" d="M8 9.500h2v2H8zM11 9.500h2v2h-2zM14 9.500h2v2h-2z"/><use href="#ck" x="11" y="16" width="13" height="13"/></svg></div>
<div class="ic"><svg width="35" height="43"><path class="fm" d="M2 15l12 6v3L2 29l2-4 7-3-7-3zM33 15l-12 6v3l12 6-2-4-7-3 7-3z"/><use href="#ck" x="12" y="9" width="11" height="11"/></svg></div>
<div class="ic gb"><svg width="35" height="43"><path fill="none" stroke="#ccc" stroke-width="2.500" d="M28 10 10 32M9 12l17 20"/><path fill="none" stroke="#63b08f" d="M8 12c-3 7-2 15 6 22M10 9c7-2 12 0 15 4"/></svg></div>
</div></div>
<div class="scr align-self-end mb-1 d-flex flex-column align-items-center"><div class="tri tup"></div><svg width="11" height="11" class="my-1"><circle cx="5.500" cy="5.500" r="5.500" fill="#666"/></svg><div class="tri"></div></div>
</div>
<div class="sep3"></div><div class="sep1"></div>

<!-- main area -->
<div class="main d-flex">
<div class="tl d-flex flex-column">
<div class="tlh"></div>
<div class="sl"><svg width="36" height="37"><path class="fg" d="M11 6V29l6-6 4 8 4-1-4-8 8-1z"/></svg></div>
<div class="sl"><svg width="36" height="37"><ellipse class="lt" cx="16" cy="16" rx="12" ry="9" stroke-dasharray="5 3" transform="rotate(-25 16 16)"/><path class="fg" d="M14 10V31l5-5 3 7 3-1-3-7 7-1z"/></svg></div>
<div class="sl"><svg width="36" height="37"><ellipse class="lt" cx="14" cy="22" rx="12" ry="10" stroke-dasharray="5 3" transform="rotate(25 14 22)"/><path class="fg" d="M32 4l2 2-14 15c-2 2-6 3-7 2 0-3 2-6 5-7z"/></svg></div>
<div class="sl"><svg width="36" height="37"><rect class="fg" x="12" y="12" width="12" height="13"/><path class="ft" d="M18 3l4 5h-8zM18 34l4-5h-8zM3 18.500l5-4v8zM33 18.500l-5-4v8z"/></svg></div>
<div class="sl"><svg width="36" height="37"><path class="lt" d="M32 18A15 15 0 1 1 25 5"/><path class="ft" d="M30 14h5l-2.500 5z"/><path class="fg" d="M18 9l9 9.500-9 9.500-9-9.500z"/></svg></div>
<div class="sl"><svg class="on" width="36" height="36"><rect x="6" y="5" width="25" height="25" fill="none" stroke="#2e4a5c" stroke-width="1.500" stroke-dasharray="3 1.500"/><rect class="fg" x="6" y="19" width="11" height="11"/><path fill="none" stroke="#c9dce6" stroke-width="1.500" d="M15 12h8v8"/><path fill="none" stroke="#2e4a5c" d="M18 15h2v2"/></svg></div>
<div class="sl"></div>
<div class="sl"><svg width="36" height="37"><rect class="lt" stroke-width="1.200" x="15" y="13" width="6" height="6"/><path class="ft" d="M18 3l3 6h-6zM4 27l7-1-3-5zM32 27l-7-1 3-5z"/><path class="lt" stroke-width="1" d="M18 9v4M12 22l3-2M24 22l-3-2"/><path class="lg" stroke-width="1" stroke-dasharray="2 1" d="M22 5h10M24 8h7"/></svg></div>
<div class="hr1"></div>
<div class="sl"><svg width="36" height="37"><rect class="lg" stroke-width="2" x="5" y="5" width="26" height="26"/><rect x="8" y="8" width="20" height="20" fill="#555" stroke="#c9c9c9"/><path class="fg" d="M18 10l4 3-4 3-4-3zM12 15l4 3-4 3-4-3zM24 15l4 3-4 3-4-3zM18 20l4 3-4 3-4-3z"/></svg></div>
<div class="sl"><svg width="36" height="37"><rect class="lg" x="5" y="5" width="12" height="12"/><rect class="fg" x="20" y="5" width="12" height="12"/><path fill="#444" d="M26 8l3 3-3 3-3-3z"/><rect class="lg" x="5" y="20" width="12" height="12"/><rect class="lg" x="20" y="20" width="12" height="12"/><path class="lg" d="M7 11h8M11 7v8M7 26h8M11 22v8M22 26h8M26 22v8"/></svg></div>
<div class="sl"><svg width="36" height="37"><rect class="lg" x="5" y="5" width="12" height="27"/><rect class="fg" x="20" y="5" width="12" height="27"/><path class="lg" d="M7 18h8M11 14v8"/><path fill="#444" d="M26 15l4 3-4 3-4-3z"/></svg></div>
<div class="sl"><svg width="36" height="37"><rect class="lg" x="5" y="5" width="26" height="27"/><path class="lg" d="M8 9h4M14 9h10M13 14h4M19 14h9M13 20h4M19 20h9M13 26h4M19 26h9M10 10v16h3"/></svg></div>
<div class="mt-auto ms-1 ps-1"><svg width="33" height="31" viewBox="0 0 33 31"><path fill="url(#mg)" d="M1 31 5 1h7l5 14L22 1h9l1 30h-8l-1-15-5 12h-3L9 14 8 31z"/></svg></div>
</div>
<div class="gut"></div>

<div class="vp">
<nav class="nav pm align-items-center flex-nowrap"><a class="nav-link">视图</a><a class="nav-link">着色</a><a class="nav-link">照明</a><a class="nav-link">显示</a><a class="nav-link">渲染器</a><a class="nav-link">面板</a></nav>
<div class="pt d-flex align-items-center">
<div class="psw"></div>
<div class="ps"><svg width="19" height="18"><rect class="fg" x="2" y="6" width="10" height="7"/><path class="fg" d="M17 4v10l-4-4v-2z"/></svg></div>
<div class="ps"><svg width="19" height="18"><rect class="ft" x="2" y="8" width="10" height="8"/><path class="lt" stroke-width="1.500" d="M4 8V6a3 3 0 0 1 6 0v2"/><path class="fg" d="M17 3v8l-3-3v-2z"/></svg></div>
<div class="ps"><svg width="19" height="18"><circle class="lt" cx="7" cy="10" r="4" stroke-width="2"/><path class="fg" d="M17 3v8l-3-3V6zM2 4h9v2H2z"/></svg></div>
<div class="ps"><svg width="19" height="18"><path class="fg" d="M6 2h7v14l-3.500-3L6 16z"/></svg></div>
<div class="ps"><svg width="19" height="18"><path class="fg" d="M13 1 8 12h6z"/><path class="ft" d="M6 9 3 15h8z"/><path class="lg" d="M1 16h14" stroke-dasharray="2 1"/></svg></div>
<div class="ps"><svg width="19" height="18"><circle class="lt" cx="11" cy="11" r="3.500" stroke-width="1.500"/><path class="lg" d="M7 1v10M2 6h10M14 14l3 3"/></svg></div>
<div class="ps"><svg width="19" height="18"><path class="fg" d="M16 2l1 1-9 8-2-1z"/><path class="lt" stroke-width="1.500" d="M5 11c-3 2-3 4-1 5h8v-3"/></svg></div>
<div class="psw"></div>
<div class="ps on ml1"><svg width="19" height="18"><rect class="lg" x="3" y="2" width="13" height="14" stroke-width="1"/><path class="lg" stroke-width="1" d="M3 7h13M3 11.500h13M7.500 2v14M12 2v14"/></svg></div>
<div class="ps"><svg width="19" height="18"><rect class="lg" x="3" y="2" width="13" height="14"/><path class="lg" stroke-dasharray="1.500 1" d="M3 4h13M3 14h13"/></svg></div>
<div class="ps"><svg width="19" height="18"><rect class="lg" x="3" y="2" width="13" height="14"/><circle class="ft" cx="9.500" cy="9" r="3"/></svg></div>
<div class="ps"><svg width="19" height="18"><rect x="1" y="0" width="17" height="18" fill="#3c3c3c"/><circle cx="9.500" cy="9" r="4" fill="#555"/></svg></div>
<div class="ps"><svg width="19" height="18"><rect class="lg" x="3" y="2" width="13" height="14"/><path class="lt" stroke-width="1" stroke-dasharray="2 1" d="M3 9h13M9.500 2v14"/></svg></div>
<div class="ps"><svg width="19" height="18"><rect class="lg" x="3" y="2" width="13" height="14"/><circle class="ft" cx="12" cy="6" r="2.500"/><path class="ft" d="M4 15l5-6 4 6z"/></svg></div>
<div class="ps"><svg width="19" height="18"><rect class="lg" x="3" y="2" width="13" height="14"/><text x="9.500" y="13" text-anchor="middle" class="ft" font-family="Liberation Serif" font-weight="bold" font-size="12">T</text></svg></div>
<div class="psw"></div>
<div class="ps ml1"><svg width="19" height="18"><path class="lg" stroke-width="1" d="M9.500 2 16 5.500v8L9.500 17 3 13.500v-8zM3 5.500l6.500 3.500L16 5.500M9.500 9v8"/></svg></div>
<div class="ps on"><svg width="19" height="18"><path fill="#9ad4e6" d="M9.500 1 17 5v9l-7.500 4L2 14V5z"/><path fill="none" stroke="#2e6075" d="M2 5l7.500 4L17 5M9.500 9v9"/></svg></div>
<div class="ps"><svg width="19" height="18"><circle class="fg" cx="9.500" cy="9" r="6.500"/><path fill="#444" d="M9.500 2.500v13a6.500 6.500 0 0 1 0-13z"/><path class="fg" opacity=".5" d="M5 6h2v2H5zM5 10h2v2H5z"/></svg></div>
<div class="ps"><svg width="19" height="18"><path class="lg" stroke-width="1" d="M9.500 2 16 5.500v8L9.500 17 3 13.500v-8zM3 5.500l6.500 3.500L16 5.500M9.500 9v8"/><path class="lt" stroke-width="1" d="M5 8l3 2v5M14 8l-3 2v5"/></svg></div>
<div class="ps"><svg width="19" height="18"><circle class="fg" cx="9.500" cy="9" r="6.500"/><path fill="none" stroke="#444" stroke-dasharray="2 2" stroke-width="2" d="M3 7h13M3 11h13"/></svg></div>
<div class="ps"><svg width="19" height="18"><path class="fg" d="M9.500 4a3.500 3.500 0 0 1 2 6.500V13h-4v-2.500A3.500 3.500 0 0 1 9.500 4zM8 14h3v2H8z"/><path class="lg" stroke-width="1" d="M9.500 0v2M3 7h2M14 7h2"/></svg></div>
<div class="ps"><svg width="19" height="18"><circle cx="9.500" cy="9" r="5" fill="#4f4f4f"/><path fill="#5a5a5a" d="M2 10l7-6 7 8-7 4z"/></svg></div>
<div class="psw"></div>
<div class="ps ml1"><svg width="19" height="18"><circle class="fg" cx="9.500" cy="6" r="4"/><path class="lt" stroke-width="1.200" stroke-dasharray="2 1" d="M2 13c4 4 11 4 15 0M5 11h9"/></svg></div>
<div class="ps"><svg width="19" height="18"><circle fill="#777" cx="6" cy="12" r="4.500"/><circle class="fg" cx="13" cy="6" r="4"/></svg></div>
<div class="ps"><svg width="19" height="18"><circle class="lt" cx="9.500" cy="9" r="5.500" stroke-dasharray="8 3"/></svg></div>
<div class="ps"><svg width="19" height="18"><rect x="1" y="0" width="17" height="18" fill="#3c3c3c"/><rect x="6" y="6" width="10" height="10" fill="#4f4f4f"/></svg></div>
<div class="psw"></div>
<div class="ps ml1"><svg width="19" height="18"><rect class="lt" stroke-width="1" stroke-dasharray="2 1" x="2" y="2" width="10" height="10"/><path class="fg" d="M8 6l8 8-3 .500 1 3-2 .500-1-3-3 2z"/></svg></div>
<div class="psw"></div>
<div class="ps ml1"><svg width="19" height="18"><rect class="lg" x="6" y="2" width="10" height="10"/><rect fill="#444" x="2" y="6" width="10" height="10" stroke="#c9c9c9" stroke-width="1.300"/><rect class="fg" x="4" y="8" width="6" height="6"/></svg></div>
<div class="ps"><svg width="19" height="18"><rect class="lg" x="4" y="8" width="10" height="8"/><path class="lg" d="M6 8V5a3 3 0 0 1 6 0"/><rect class="fg" x="6" y="10" width="6" height="4"/></svg></div>
<div class="ps"><svg width="19" height="18"><rect class="lg" x="3" y="2" width="13" height="14"/><path class="lg" d="M6 5l7 8"/><path class="fg" d="M5 4h4L5 8z"/></svg></div>
<div class="psw"></div>
<div class="ps ml1"><svg width="19" height="18"><circle class="lg" stroke-width="3" cx="9.500" cy="9" r="5" stroke-dasharray="5 2.800"/></svg></div>
<div class="pf ml2">0.00</div>
<div class="ps ml2"><svg width="19" height="18"><circle class="fg" cx="9.500" cy="9" r="5.500"/><path fill="#444" d="M9.500 3.500v11a5.500 5.500 0 0 1-1.500-10.800z"/></svg></div>
<div class="pf ml1">1.00</div>
<div class="ps on ml3"><svg width="19" height="18"><circle class="lg" cx="9.500" cy="9" r="6.500"/><circle cx="9.500" cy="9" r="5.500" fill="#4ea5b8"/><text x="9.500" y="11.500" text-anchor="middle" fill="#1e4a55" font-size="7" font-family="Liberation Sans">ON</text></svg></div>
<div class="srgb d-flex">sRGB gamma<div class="srgba"><div class="tri"></div></div></div>
</div>

<svg class="gl" viewBox="50 193 1382 750" width="1382" height="750">
<g id="flr" stroke-width="1"></g>
<path fill="#7a7a7a" d="M336 410 506 387 848 418 695 450Z"/>
<path fill="#8a8a8a" d="M336 410 695 450V465L336 421Z"/>
<path fill="#838383" d="M695 450 848 418V429L695 465Z"/>
<path fill="none" stroke="#2c2c2c" stroke-dasharray="2 1" d="M336 421 695 465 848 429"/>
<path fill="#8c8c8c" d="M681 463 698 466 699 693 684 689Z"/>
<path fill="#868686" d="M698 466 709 461 710 688 699 693Z"/>
<path fill="none" stroke="#6fe6c0" stroke-width="1" d="M681 463 684 689 698 694 710 688 709 461M698 465V694"/>
<path stroke="#ffff00" stroke-width="1" d="M696 490V555"/>
<rect x="688" y="481" width="15" height="12" fill="#ffff00"/>
<path stroke="#b8b8b8" d="M648 590 690 577M702 577 756 588"/>
<rect x="691" y="571" width="10" height="10" fill="none" stroke="#62c8f0" stroke-width="3"/>
<rect x="638" y="587" width="14" height="12" fill="#0000d8" rx="2"/><rect x="636" y="592" width="6" height="6" fill="#aaa"/>
<rect x="754" y="582" width="14" height="12" fill="#e00000" rx="2"/><rect x="768" y="586" width="6" height="6" fill="#aaa"/>
<rect x="701" y="495" width="10" height="10" fill="#777" stroke="#fff" stroke-width="1.200"/><rect x="701.500" y="495.500" width="10" height="10" fill="none" stroke="#111" stroke-width=".6"/>
<path fill="#fff" stroke="#111" stroke-width=".6" d="M708 501 717 509 714 510 719 513 717 515 712 512 711 514z"/>
<path stroke="#22cc22" d="M75 917V904"/><path stroke="#2222cc" d="M75 917H65"/><path stroke="#cc2222" d="M75 917H88"/>
<text x="72" y="902" fill="#22cc22" font-size="10" font-family="Liberation Sans" font-weight="bold">y</text>
<text x="64" y="922" fill="#2222cc" font-size="10" font-family="Liberation Sans" font-weight="bold">z</text>
<text x="85" y="922" fill="#cc2222" font-size="10" font-family="Liberation Sans" font-weight="bold">x</text>
</svg>

<div class="hud">
<span class="hl">顶点:</span><span>64</span><span>8</span><span>0</span>
<span class="hl">边:</span><span>120</span><span>12</span><span>0</span>
<span class="hl">面:</span><span>60</span><span>6</span><span>0</span>
<span class="hl">三角形:</span><span>120</span><span>12</span><span>0</span>
<span class="hl">UV:</span><span>90</span><span>14</span><span>0</span>
</div>
<div class="persp">persp</div>
</div>
<div class="gut"></div>

<!-- channel box -->
<div class="cbox d-flex flex-column">
<div class="chic d-flex justify-content-end align-items-center"><svg width="16" height="16"><path class="fg" d="M8 1l2 4H6z"/><rect class="fg" x="6" y="5" width="4" height="4"/><path fill="#3e7dcc" d="M1 15l3-6 3 6z"/><path fill="#cc4444" d="M9 15l3-6 3 6z"/></svg><svg width="16" height="16"><path class="lt" stroke-width="3.500" d="M3 15V8a5 5 0 0 1 10 0v7"/></svg><svg width="16" height="16"><path class="lt" stroke-width="1.300" d="M2 2v13h13"/><path class="lt" stroke-width="1.500" d="M3 14 14 2"/></svg></div>
<nav class="nav chm flex-nowrap mnu"><a class="nav-link">通道</a><a class="nav-link">编辑</a><a class="nav-link">对象</a><a class="nav-link">显示</a></nav>
<div class="nm nm1">pCube2</div>
<div class="d-flex rw"><div class="rl"><b>平移</b> X</div><div class="rv">7.118</div></div>
<div class="d-flex rw"><div class="rl"><b>平移</b> Y</div><div class="rv">3.441</div></div>
<div class="d-flex rw"><div class="rl"><b>平移</b> Z</div><div class="rv">3.237</div></div>
<div class="d-flex rw"><div class="rl"><b>旋转</b> X</div><div class="rv">0</div></div>
<div class="d-flex rw"><div class="rl"><b>旋转</b> Y</div><div class="rv">0</div></div>
<div class="d-flex rw"><div class="rl"><b>旋转</b> Z</div><div class="rv">0</div></div>
<div class="d-flex rw"><div class="rl"><b>缩放</b> X</div><div class="rv">0.554</div></div>
<div class="d-flex rw"><div class="rl"><b>缩放</b> Y</div><div class="rv">7.125</div></div>
<div class="d-flex rw"><div class="rl"><b>缩放</b> Z</div><div class="rv">0.554</div></div>
<div class="d-flex rw"><div class="rl"><b>可见性</b></div><div class="rv rv2">启用</div></div>
<div class="hdg">形状</div>
<div class="nm bar">pCubeShape2</div>
<div class="d-flex rw"><div class="rl">Ai Override Light Linking</div><div class="rv rv2">启用</div></div>
<div class="d-flex rw"><div class="rl">Ai Override Shaders</div><div class="rv rv2">启用</div></div>
<div class="d-flex rw"><div class="rl">Ai Use Frame Extension</div><div class="rv">禁用</div></div>
<div class="d-flex rw"><div class="rl">Ai Frame Number</div><div class="rv">0</div></div>
<div class="d-flex rw"><div class="rl">Ai Use Sub Frame</div><div class="rv">禁用</div></div>
<div class="d-flex rw"><div class="rl">Ai Frame Offset</div><div class="rv">0</div></div>
<div class="d-flex rw"><div class="rl">Ai Override Nodes</div><div class="rv">禁用</div></div>
<div class="d-flex rw"><div class="rl">Ai Override Receive Shadows</div><div class="rv">禁用</div></div>
<div class="d-flex rw"><div class="rl">Ai Override Double Sided</div><div class="rv">禁用</div></div>
<div class="d-flex rw"><div class="rl">Ai Override Self Shadows</div><div class="rv">禁用</div></div>
<div class="d-flex rw"><div class="rl">Ai Override Opaque</div><div class="rv">禁用</div></div>
<div class="d-flex rw"><div class="rl">Ai Override Matte</div><div class="rv">禁用</div></div>
<div class="hdg">输入</div>
<div class="nm sub">polyCube2</div>
<div class="blk"></div>
<div class="dots"></div>
<div class="lay d-flex flex-column">
<ul class="nav nav-tabs ltabs"><li><a class="nav-link active">显示</a></li><li><a class="nav-link">动画</a></li></ul>
<nav class="nav lm mnu flex-nowrap align-items-center"><a class="nav-link">层</a><a class="nav-link">选项</a><a class="nav-link">帮助</a></nav>
<div class="lic d-flex justify-content-end align-items-center">
<svg width="18" height="12"><path class="fg" d="M1 6l6-5 5 5-5 5z"/><path class="ft" d="M14 2l4 4h-2.500v5h-3V6H10z"/></svg>
<svg width="18" height="12"><path class="fg" d="M1 6l6-5 5 5-5 5z"/><path class="ft" d="M14 11l4-4h-2.500V2h-3v5H10z"/></svg>
<svg width="18" height="12" class="ml4"><path class="fg" d="M1 6l6-5 5 5-5 5z"/><path class="ft" d="M13 0h2v3h3v2h-3v3h-2V5h-3V3h3z"/></svg>
<svg width="18" height="12"><path class="fg" d="M1 6l6-5 5 5-5 5z"/><circle class="ft" cx="13" cy="4" r="3.500"/></svg>
</div>
<div class="llist"></div>
</div>
</div>

<div class="vt d-flex flex-column">
<div class="vtb v1">通道盒/层编辑器</div>
<div class="vtb v2">建模工具包</div>
<div class="vtb v3">属性编辑器</div>
</div>
</div>
<div class="sep3"></div>

<!-- timeline -->
<div class="tlr d-flex align-items-center">
<div class="hd"></div>
<div class="trk d-flex">
<div class="cur">1</div>
<div class="tk">5</div><div class="tk">10</div><div class="tk">15</div><div class="tk">20</div><div class="tk">25</div><div class="tk">30</div><div class="tk">35</div><div class="tk">40</div><div class="tk">45</div><div class="tk">50</div><div class="tk">55</div><div class="tk">60</div><div class="tk">65</div><div class="tk">70</div><div class="tk">75</div><div class="tk">80</div><div class="tk">85</div><div class="tk">90</div><div class="tk">95</div><div class="tk">100</div><div class="tk">105</div><div class="tk">110</div><div class="tk">115</div><div class="tk">120</div>
</div>
<div class="fd fd21 ml7">1</div>
<div class="d-flex pb">
<div class="tb"><svg width="20" height="16"><path class="fg" d="M1 2h2v12H1zM11 2v12L5 8zM18 2v12l-6-6z"/></svg></div>
<div class="tb"><svg width="20" height="16"><path class="fg" d="M3 2h2v12H3zM15 2v12L7 8z"/></svg></div>
<div class="tb"><svg width="20" height="22"><rect x="3" y="2" width="3" height="18" fill="#d9783f"/><path class="fg" d="M17 3v16L8 11z"/></svg></div>
<div class="tb"><svg width="20" height="20"><path class="fg" d="M16 2v16L3 10z"/></svg></div>
<div class="tb"><svg width="20" height="20"><path class="fg" d="M4 2v16l13-8z"/></svg></div>
<div class="tb"><svg width="20" height="22"><rect x="14" y="2" width="3" height="18" fill="#d9783f"/><path class="fg" d="M3 3v16l9-8z"/></svg></div>
<div class="tb"><svg width="20" height="16"><path class="fg" d="M15 2h2v12h-2zM5 2v12l8-6z"/></svg></div>
<div class="tb"><svg width="20" height="16"><path class="fg" d="M17 2h2v12h-2zM2 2v12l6-6zM9 2v12l6-6z"/></svg></div>
</div>
</div>
<div class="sep3"></div>

<!-- range -->
<div class="rng d-flex align-items-center">
<div class="hd"></div>
<div class="fd ml6">1</div><div class="fd ms-2">1</div>
<div class="strip d-flex align-items-center"><div class="sld d-flex align-items-center"><div class="knob"></div>1<span class="ms-auto">120</span><div class="knob knob2"></div></div></div>
<div class="fd ml5">120</div><div class="fd ms-2">200</div>
<div class="vs ml2 flex-none"></div>
<div class="dsp d-flex align-items-center ml4"><div class="tri tsm"></div></div>
<div class="fl ml5" id="chr">无角色集</div>
<div class="dsp d-flex align-items-center ml8"><div class="tri tsm"></div></div>
<div class="fl ml6" id="ani">无动画层</div>
<div class="vs ml5"></div>
<div class="dd d-flex flex-none ml8" id="fps">24 fps<div class="dda"><div class="tri"></div></div></div>
<div class="tb ml9"><svg width="20" height="18"><path class="lg" stroke-width="2.500" d="M3 10V7h11M17 8v3H5"/><path class="fg" d="M12 2l6 5-6 .5zM8 16l-6-5 6-.5z"/></svg></div>
<div class="vs ml3"></div>
<div class="tb ml5"><svg width="20" height="20"><circle class="lg" cx="10" cy="10" r="8" stroke-dasharray="11 3"/><path class="fo" d="M9 5h2v6H9z"/><path class="fg" d="M5 9h10v2H5z"/></svg></div>
<div class="tb ml8"><svg width="22" height="20"><circle class="lg" stroke-dasharray="2 1" cx="5" cy="4" r="3"/><circle class="fo" cx="14" cy="4" r="2.500"/><path class="fo" d="M12 7l4 0 3 4-2 1-2-2-1 3 3 3-1 4-2-.5.5-2.500-3-2-2 3-3-1 3-4 1-4-3 1-1-2z"/></svg></div>
</div>
<div class="sep2"></div>

<!-- command line -->
<div class="cmd d-flex align-items-center">
<div class="hd"></div>
<div class="mel">MEL</div>
<div class="c1"></div><div class="c2"></div>
<svg width="20" height="20" class="ms-1" viewBox="0 0 20 20"><rect class="fg" x="1" y="4" width="18" height="15"/><rect class="fg" x="1" y="0" width="18" height="3"/><path fill="#444" d="M3 1h2v1H3zM6 1h2v1H6zM9 1h2v1H9z"/><text x="10" y="15" text-anchor="middle" fill="#444" font-size="9" font-family="Liberation Sans">{;}</text></svg>
</div>
<div class="sep1"></div>

<!-- status -->
<div class="stat d-flex">
<div class="hd"></div>
<span class="st1">缩放:</span><span class="st2">0.554</span><span class="st2">7.125</span><span class="st2">0.554</span>
</div>

<script>
(function(){
  var P=[[527,523],[1049,601],[633,828],[77,637]];
  var x0=P[0][0],y0=P[0][1],x1=P[1][0],y1=P[1][1],x2=P[2][0],y2=P[2][1],x3=P[3][0],y3=P[3][1];
  var dx1=x1-x2,dx2=x3-x2,sx=x0-x1+x2-x3,dy1=y1-y2,dy2=y3-y2,sy=y0-y1+y2-y3;
  var den=dx1*dy2-dx2*dy1,g=(sx*dy2-dx2*sy)/den,h=(dx1*sy-sx*dy1)/den;
  var a=x1-x0+g*x1,b=x3-x0+h*x3,d=y1-y0+g*y1,e=y3-y0+h*y3;
  function pt(u,v){var w=g*u+h*v+1;return [(a*u+b*v+x0)/w,(d*u+e*v+y0)/w];}
  var N=24,out='';
  function line(p,q,i){
    var c=i==12?'#2e2e2e':((i%5==2)?'#3f3f3f':'#4c4c4c');
    out+='<line x1="'+p[0].toFixed(1)+'" y1="'+p[1].toFixed(1)+'" x2="'+q[0].toFixed(1)+'" y2="'+q[1].toFixed(1)+'" stroke="'+c+'"/>';
  }
  for(var i=0;i<=N;i++){var t=i/N;line(pt(t,0),pt(t,1),i);line(pt(0,t),pt(1,t),i);}
  document.getElementById('flr').innerHTML=out;
})();
</script>
</body></html>
